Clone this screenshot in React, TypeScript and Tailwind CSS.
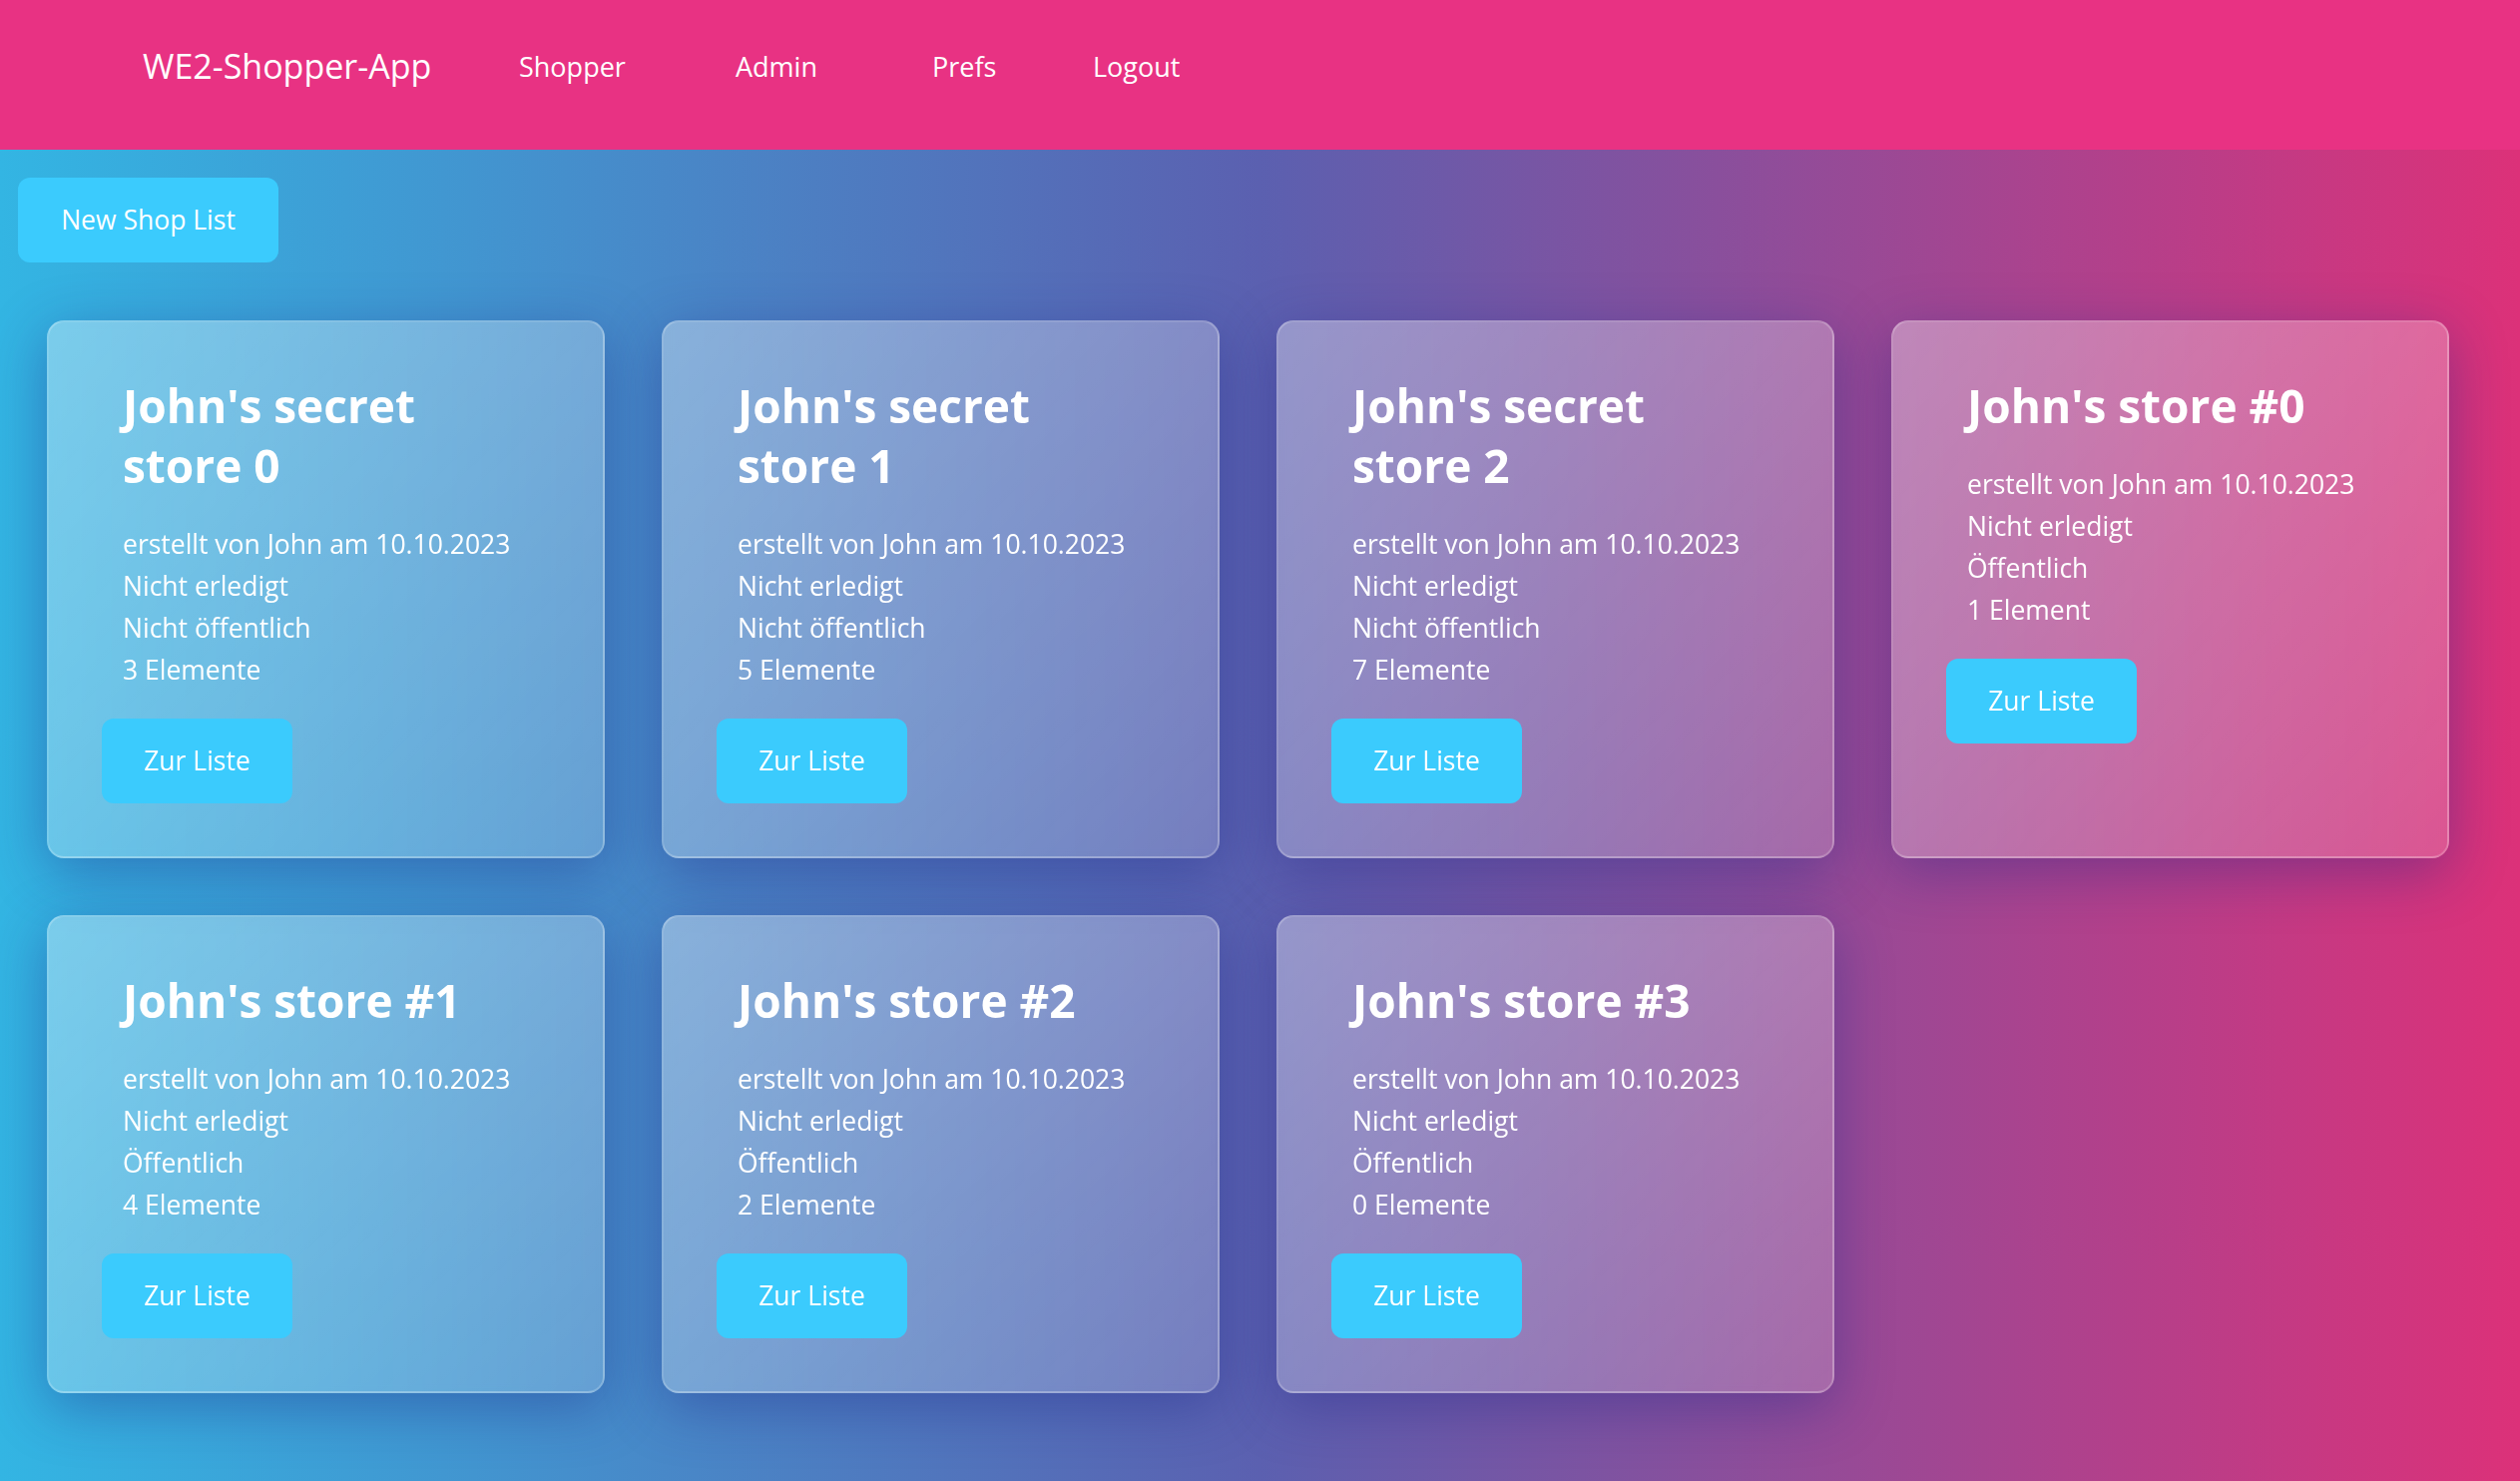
import React from "react";

type Shop = {
  title: string;
  done: string;
  pub: string;
  count: string;
};

const shops: Shop[] = [
  { title: "John's secret store 0", done: "Nicht erledigt", pub: "Nicht öffentlich", count: "3 Elemente" },
  { title: "John's secret store 1", done: "Nicht erledigt", pub: "Nicht öffentlich", count: "5 Elemente" },
  { title: "John's secret store 2", done: "Nicht erledigt", pub: "Nicht öffentlich", count: "7 Elemente" },
  { title: "John's store #0", done: "Nicht erledigt", pub: "Öffentlich", count: "1 Element" },
  { title: "John's store #1", done: "Nicht erledigt", pub: "Öffentlich", count: "4 Elemente" },
  { title: "John's store #2", done: "Nicht erledigt", pub: "Öffentlich", count: "2 Elemente" },
  { title: "John's store #3", done: "Nicht erledigt", pub: "Öffentlich", count: "0 Elemente" },
];

function Card({ shop }: { shop: Shop }) {
  return (
    <div className="w-[559px] rounded-[17px] border-2 border-white/20 bg-linear-to-br from-white/35 to-white/17 p-[53px] shadow-[0_14px_56px_rgba(31,38,135,0.4)] backdrop-blur-[4px]">
      <div className="pl-[21px] text-white">
        <h2 className="m-0 max-w-[395px] text-[46px] font-bold leading-[60px]">{shop.title}</h2>
        <div className="mt-[28px] text-[26.5px] leading-[42px]">
          <div>erstellt von John am 10.10.2023</div>
          <div>{shop.done}</div>
          <div>{shop.pub}</div>
          <div>{shop.count}</div>
        </div>
      </div>
      <button className="mt-[28px] h-[85px] w-[191px] rounded-[12px] bg-[#3bcbfd] text-[26.5px] text-white">
        Zur Liste
      </button>
    </div>
  );
}

export default function App() {
  return (
    <div className="min-h-screen w-full bg-[linear-gradient(to_right,#33b5e3_0%,#5b60b0_50%,#dc3179_100%)] font-['Open_Sans',sans-serif] text-white">
      <header className="flex h-[150px] items-start bg-[#e83283]">
        <div className="ml-[143px] mt-[49px] w-[377px] text-[34px] leading-[34px]">WE2-Shopper-App</div>
        <nav className="mt-[53px] flex text-[27px] leading-[27px]">
          <a className="w-[217px]">Shopper</a>
          <a className="w-[197px]">Admin</a>
          <a className="w-[161px]">Prefs</a>
          <a>Logout</a>
        </nav>
      </header>
      <main className="px-[18px] pt-[28px] pb-[89px]">
        <button className="h-[85px] w-[261px] rounded-[12px] bg-[#3bcbfd] text-[26.5px] text-white">
          New Shop List
        </button>
        <div className="mt-[58px] flex flex-wrap gap-[57px] pl-[29px]">
          {shops.map((s) => (
            <Card key={s.title} shop={s} />
          ))}
        </div>
      </main>
    </div>
  );
}
